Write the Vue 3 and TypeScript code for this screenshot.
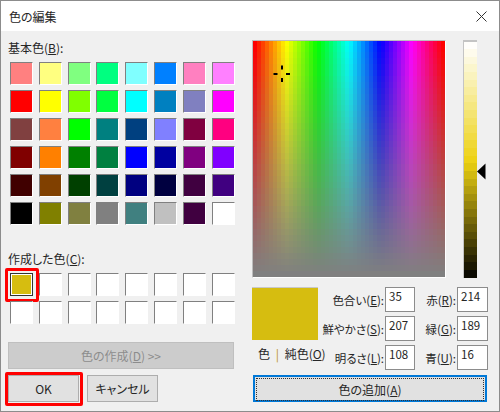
<script setup lang="ts">
import { onMounted, ref } from 'vue'

const basic: string[] = [
  '#ff8080', '#ffff80', '#80ff80', '#00ff80', '#80ffff', '#0080ff', '#ff80c0', '#ff80ff',
  '#ff0000', '#ffff00', '#80ff00', '#00ff40', '#00ffff', '#0080c0', '#8080c0', '#ff00ff',
  '#804040', '#ff8040', '#00ff00', '#008080', '#004080', '#8080ff', '#800040', '#ff0080',
  '#800000', '#ff8000', '#008000', '#008040', '#0000ff', '#0000a0', '#800080', '#8000ff',
  '#400000', '#804000', '#004000', '#004040', '#000080', '#000040', '#400040', '#400080',
  '#000000', '#808000', '#808040', '#808080', '#408080', '#c0c0c0', '#400040', '#ffffff',
]
const custom: string[] = ['#d6bd10', ...Array(15).fill('#ffffff')]

const spectrum = ref<HTMLCanvasElement | null>(null)
const slider = ref<HTMLCanvasElement | null>(null)

onMounted(() => {
  const s = spectrum.value?.getContext('2d')
  if (s) {
    const cols = 48
    const rows = 40
    const w = 192 / cols
    const h = 236 / rows
    for (let c = 0; c < cols; c++) {
      for (let r = 0; r < rows; r++) {
        const sat = 100 * (1 - r / (rows - 1))
        s.fillStyle = `hsl(${(c * 360) / (cols - 1)}, ${sat}%, 50%)`
        s.fillRect(Math.floor(c * w), Math.floor(r * h), Math.ceil(w), Math.ceil(h))
      }
    }
  }
  const b = slider.value?.getContext('2d')
  if (b) {
    const steps = 31
    const h = 236 / steps
    for (let i = 0; i < steps; i++) {
      b.fillStyle = `hsl(52.5, 86%, ${100 * (1 - (i + 0.25) / steps)}%)`
      b.fillRect(0, Math.floor(i * h), 13, Math.ceil(h))
    }
  }
})
</script>

<template>
  <div class="dialog">
    <header class="title">
      <span>色の編集</span>
      <svg class="close" width="11" height="11" viewBox="0 0 11 11">
        <path d="M0.5 0.5 L10.5 10.5 M10.5 0.5 L0.5 10.5" stroke="#333" stroke-width="1" fill="none" />
      </svg>
    </header>
    <main class="body">
      <section class="left">
        <div class="label first">基本色(<u>B</u>):</div>
        <div class="swatches">
          <div v-for="(c, i) in basic" :key="i" class="swatch" :style="{ background: c }"></div>
        </div>
        <div class="label second">作成した色(<u>C</u>):</div>
        <div class="swatches">
          <div
            v-for="(c, i) in custom"
            :key="i"
            class="swatch"
            :class="{ selected: i === 0 }"
            :style="{ background: c }"
          ></div>
        </div>
        <button class="btn define" disabled>色の作成(<u>D</u>) &gt;&gt;</button>
        <div class="actions">
          <button class="btn ok">OK</button>
          <button class="btn cancel">キャンセル</button>
        </div>
      </section>

      <section class="right">
        <div class="picker">
          <div class="spectrum-wrap">
            <canvas ref="spectrum" class="spectrum" width="192" height="236"></canvas>
            <svg class="cross" width="18" height="18" viewBox="0 0 18 18">
              <path d="M9 0.5 V4.5 M9 13 V17 M0.5 9 H4.5 M13 9 H17" stroke="#000" stroke-width="2" fill="none" />
            </svg>
          </div>
          <div class="slider-wrap">
            <canvas ref="slider" class="slider" width="13" height="236"></canvas>
            <svg class="arrow" width="9" height="17" viewBox="0 0 9 17">
              <path d="M0 8.5 L8.5 0.5 V16.5 Z" fill="#000" />
            </svg>
          </div>
        </div>

        <div class="values">
          <div class="preview">
            <div class="solid"></div>
            <div class="solid-label">色 <i>|</i> 純色(<u>O</u>)</div>
          </div>
          <div class="fields">
            <label class="flabel">色合い(<u>E</u>):</label>
            <div class="field">35</div>
            <label class="flabel">赤(<u>R</u>):</label>
            <div class="field">214</div>
            <label class="flabel">鮮やかさ(<u>S</u>):</label>
            <div class="field">207</div>
            <label class="flabel">緑(<u>G</u>):</label>
            <div class="field">189</div>
            <label class="flabel">明るさ(<u>L</u>):</label>
            <div class="field">108</div>
            <label class="flabel">青(<u>U</u>):</label>
            <div class="field">16</div>
          </div>
        </div>

        <button class="btn add"><span>色の追加(<u>A</u>)</span></button>
      </section>
    </main>
  </div>
</template>

<style>
html,
body {
  margin: 0;
  background: #f0f0f0;
}
</style>

<style scoped>
.dialog {
  box-sizing: border-box;
  width: 500px;
  height: 412px;
  border: 1px solid #8c8c8c;
  background: #f0f0f0;
  font-family: "Noto Sans CJK JP", "Liberation Sans", sans-serif;
  font-feature-settings: "palt";
  font-size: 12px;
  color: #262626;
  display: flex;
  flex-direction: column;
  overflow: hidden;
}
.title {
  height: 30px;
  background: #fff;
  display: flex;
  align-items: center;
  justify-content: space-between;
  padding: 0 12px 0 8px;
  flex: none;
  font-size: 12px;
}
.close {
  display: block;
}
.body {
  display: flex;
  padding: 9px 0 0 7px;
  gap: 17px;
}
.left {
  width: 227px;
  flex: none;
}
.label {
  height: 16px;
  line-height: 16px;
  white-space: nowrap;
}
.first {
  margin-bottom: 6px;
}
.second {
  margin-top: 26px;
  margin-bottom: 6px;
}
.swatches {
  display: grid;
  grid-template-columns: repeat(8, 23px);
  grid-auto-rows: 23px;
  column-gap: 5.8px;
  row-gap: 5px;
  padding-left: 2px;
}
.swatch {
  box-sizing: border-box;
  border-style: solid;
  border-width: 1px;
  border-color: #808080 #fff #fff #808080;
  position: relative;
}
.selected {
  border-color: #333;
  box-shadow: inset 0 0 0 1px #fff;
}
.selected::after {
  content: "";
  position: absolute;
  left: -6px;
  top: -6px;
  width: 28px;
  height: 28px;
  border: 3px solid #f00;
  border-radius: 2px;
}
.btn {
  box-sizing: border-box;
  font-family: inherit;
  font-feature-settings: inherit;
  font-size: 12px;
  color: #262626;
  background: #e1e1e1;
  border: 1px solid #adadad;
  padding: 0;
  margin: 0;
  display: block;
}
.define {
  width: 226px;
  height: 27px;
  margin: 18px 0 0 0;
  background: #cccccc;
  border-color: #bfbfbf;
  color: #8c8c8c;
}
.actions {
  display: flex;
  gap: 8px;
  margin: 6px 0 0 0;
}
.ok,
.cancel {
  width: 71px;
  height: 27px;
}
.ok {
  position: relative;
}
.ok::after {
  content: "";
  position: absolute;
  left: -4px;
  top: -4px;
  width: 72px;
  height: 28px;
  border: 3px solid #f00;
  border-radius: 2px;
}
.right {
  width: 236px;
  flex: none;
}
.picker {
  display: flex;
  height: 238px;
}
.spectrum-wrap {
  position: relative;
  width: 194px;
  height: 238px;
  flex: none;
}
.spectrum {
  display: block;
  box-sizing: content-box;
  border-style: solid;
  border-width: 1px;
  border-color: #bdbdbd #fff #fff #bdbdbd;
}
.cross {
  position: absolute;
  left: 21px;
  top: 25px;
}
.slider-wrap {
  position: relative;
  margin-left: 17px;
  width: 14px;
  height: 238px;
}
.slider {
  display: block;
  box-sizing: content-box;
  border-style: solid;
  border-width: 2px 0 0 1px;
  border-color: #c4c4c4 #fff #fff #c4c4c4;
}
.arrow {
  position: absolute;
  left: 14px;
  top: 123px;
}
.values {
  display: flex;
  margin-top: 9px;
  height: 83px;
}
.preview {
  width: 66px;
  flex: none;
}
.solid {
  height: 53px;
  background: #d6bd10;
  border-top: 1px solid #c8c8c8;
  box-sizing: border-box;
}
.solid-label {
  margin-top: 6px;
  line-height: 16px;
  white-space: nowrap;
  width: 74px;
  padding-left: 6px;
}
.solid-label i {
  color: #b8901c;
  font-style: normal;
  margin: 0 3px;
}
.fields {
  display: grid;
  flex: 1;
  grid-template-columns: 67px 30px 42px 31px;
  grid-auto-rows: 25px;
  row-gap: 4px;
  align-items: center;
}
.flabel {
  text-align: right;
  white-space: nowrap;
  justify-self: end;
  padding-right: 1px;
  font-size: 11.5px;
}
.field {
  box-sizing: border-box;
  height: 25px;
  background: #fff;
  border: 1px solid #8c8c8c;
  padding: 0 0 0 3px;
  line-height: 17px;
  font-size: 11.5px;
}
.add {
  width: 234px;
  height: 27px;
  margin: 5px 0 0 1px;
  border: 2px solid #0078d7;
  position: relative;
}
.add span {
  display: flex;
  align-items: center;
  justify-content: center;
  height: 21px;
  margin: 1px;
  border: 1px dotted #333;
}
u {
  text-underline-offset: 1px;
}
</style>
